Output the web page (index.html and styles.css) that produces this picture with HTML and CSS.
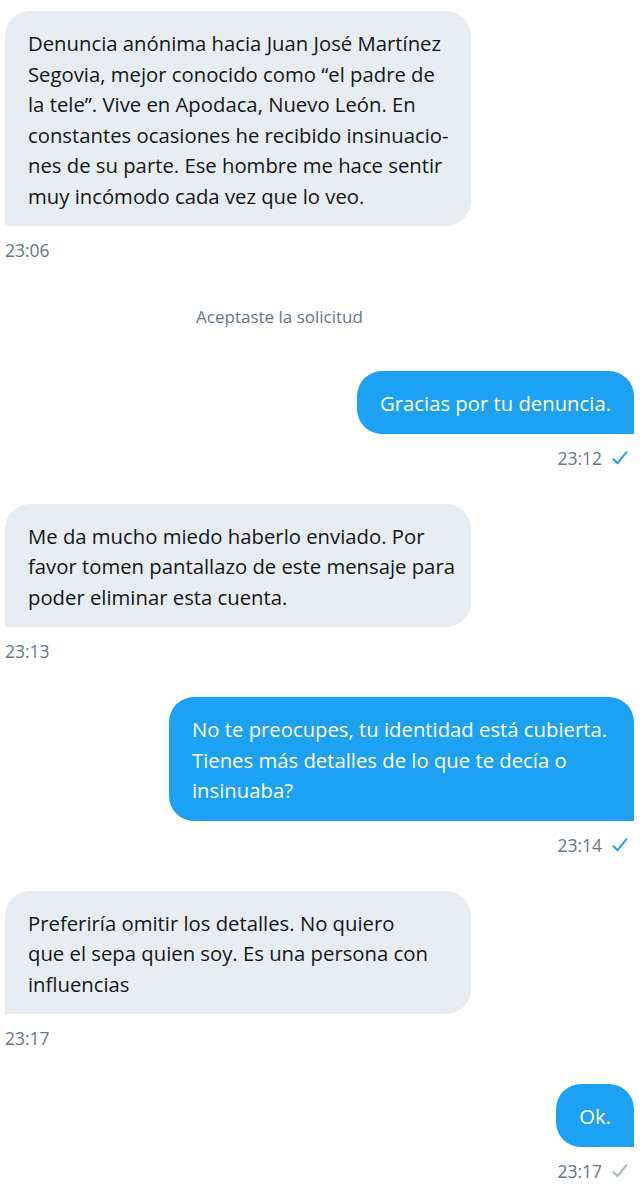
FILE: index.html
```html
<!DOCTYPE html>
<html lang="es">

<head>
    <meta charset="UTF-8">
    <meta name="viewport" content="width=device-width, initial-scale=1.0">
    <title>Mensajes</title>
    <link rel="stylesheet" href="styles.css">
</head>

<body>
    <div id="chat">
        <div class="msg received">
            <div class="bubble">Denuncia anónima hacia Juan José Martínez<br>Segovia, mejor conocido como “el padre de<br>la tele”. Vive en Apodaca, Nuevo León. En<br>constantes ocasiones he recibido insinuacio-<br>nes de su parte. Ese hombre me hace sentir<br>muy incómodo cada vez que lo veo.</div>
            <div class="time">23:06</div>
        </div>

        <div class="system">Aceptaste la solicitud</div>

        <div class="msg sent">
            <div class="bubble">Gracias por tu denuncia.</div>
            <div class="time">23:12
                <svg class="check" viewBox="0 0 16 16"><path d="M1.5 9.2 L5.6 13.2 L14.5 2.2"/></svg>
            </div>
        </div>

        <div class="msg received">
            <div class="bubble">Me da mucho miedo haberlo enviado. Por<br>favor tomen pantallazo de este mensaje para<br>poder eliminar esta cuenta.</div>
            <div class="time">23:13</div>
        </div>

        <div class="msg sent">
            <div class="bubble wide">No te preocupes, tu identidad está cubierta.<br>Tienes más detalles de lo que te decía o<br>insinuaba?</div>
            <div class="time">23:14
                <svg class="check" viewBox="0 0 16 16"><path d="M1.5 9.2 L5.6 13.2 L14.5 2.2"/></svg>
            </div>
        </div>

        <div class="msg received">
            <div class="bubble">Preferiría omitir los detalles. No quiero<br>que el sepa quien soy. Es una persona con<br>influencias</div>
            <div class="time">23:17</div>
        </div>

        <div class="msg sent">
            <div class="bubble">Ok.</div>
            <div class="time">23:17
                <svg class="check pending" viewBox="0 0 16 16"><path d="M1.5 9.2 L5.6 13.2 L14.5 2.2"/></svg>
            </div>
        </div>
    </div>
</body>

</html>
```

FILE: styles.css
```css
body, html {
    margin: 0;
    background: #ffffff;
    font-family: "Open Sans", "Noto Sans", sans-serif;
    color: #14171a;
}

#chat {
    display: flex;
    flex-direction: column;
    padding: 11px 8px 0 5px;
}

.msg {
    display: flex;
    flex-direction: column;
    margin-bottom: 34px;
}

.msg:last-child {
    margin-bottom: 0;
}

.msg.received {
    align-items: flex-start;
}

.msg.sent {
    align-items: flex-end;
}

.bubble {
    font-size: 20.3px;
    line-height: 30.5px;
    padding: 17px 23px 15px;
    border-radius: 25px;
    white-space: nowrap;
}

.received .bubble {
    background: #e6ecf0;
    border-bottom-left-radius: 0;
    width: 420px; /* gray bubbles all run to the same edge */
}

.sent .bubble {
    background: #1da1f2;
    color: #ffffff;
    border-bottom-right-radius: 0;
}

.sent .bubble.wide {
    width: 419px;
}

.time {
    display: flex;
    align-items: center;
    gap: 10px;
    margin-top: 12px;
    font-size: 17.5px;
    line-height: 24px;
    color: #657786;
}

.sent .time {
    margin-right: 6px;
}

.check {
    width: 16px;
    height: 16px;
    fill: none;
    stroke: #1da1f2;
    stroke-width: 2;
    stroke-linecap: round;
    stroke-linejoin: round;
}

.check.pending {
    stroke: #aab8c2;
}

.system {
    margin: 9px 0 42px;
    padding-right: 80px;
    text-align: center;
    font-size: 17px;
    line-height: 24px;
    color: #657786;
}
```
